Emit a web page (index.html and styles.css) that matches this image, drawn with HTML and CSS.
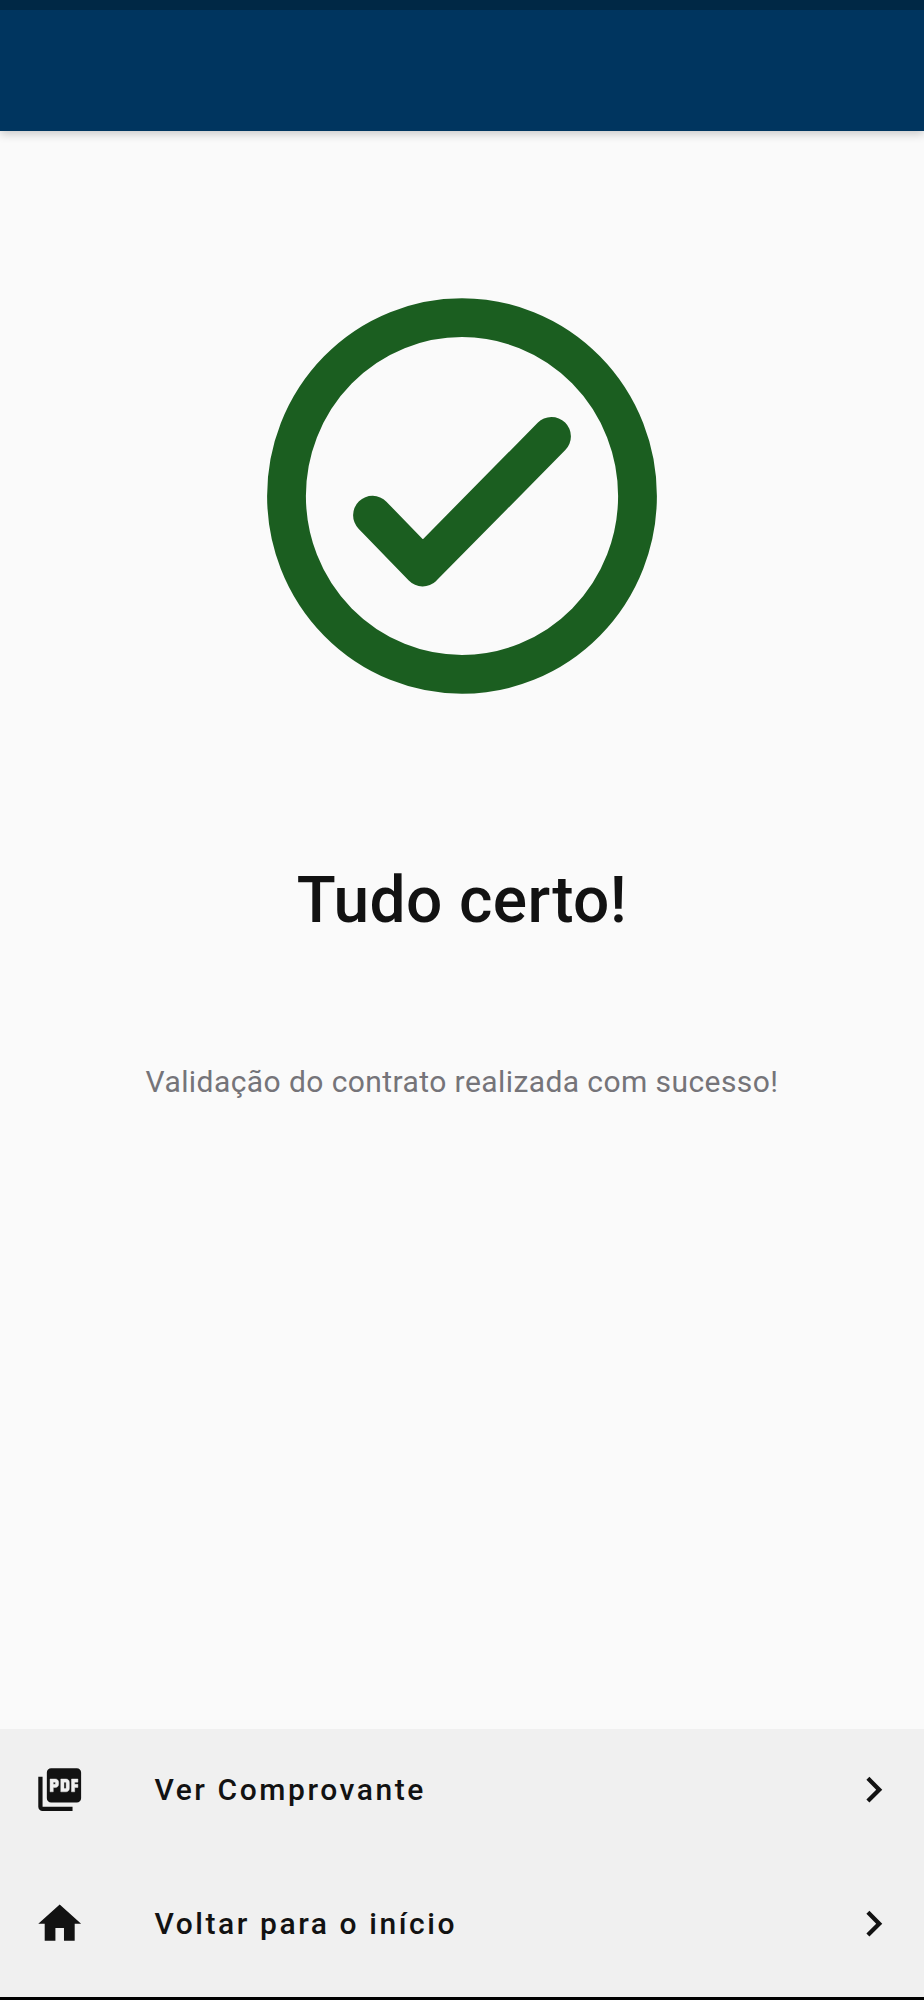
FILE: index.html
```html
<!DOCTYPE html>
<html lang="pt-BR">
<head>
  <meta charset="UTF-8">
  <meta name="viewport" content="width=device-width, initial-scale=1.0">
  <title>Tudo certo!</title>
  <link rel="stylesheet" href="styles.css">
</head>
<body>
  <div class="screen">
    <header class="app-bar"></header>

    <main class="content">
      <svg class="check" viewBox="0 0 390 396">
        <ellipse cx="195" cy="198" rx="175.5" ry="178.3"/>
        <path d="M105.5 217.2L155.7 269L284.5 138.4"/>
      </svg>
      <h1>Tudo certo!</h1>
      <p>Validação do contrato realizada com sucesso!</p>
    </main>

    <nav class="actions">
      <a class="action">
        <svg class="icon pdf" viewBox="0 0 24 24">
          <path d="M20 2H8c-1.100 0-2 .9-2 2v12c0 1.100.9 2 2 2h12c1.100 0 2-.9 2-2V4c0-1.100-.9-2-2-2zM4 6H2v14c0 1.100.9 2 2 2h14v-2H4V6z"/>
          <path class="mark" d="M11.500 9.500c0 .83-.67 1.500-1.500 1.500H9v2H7.500V7H10c.83 0 1.500.67 1.500 1.500v1zm5 2c0 .83-.67 1.500-1.500 1.500h-2.500V7H15c.83 0 1.500.67 1.500 1.500v3zm4-3H19v1h1.500V11H19v2h-1.500V7h3v1.500zM9 9.500h1v-1H9v1zm5 2h1v-3h-1v3z"/>
        </svg>
        <span class="label">Ver Comprovante</span>
        <svg class="icon" viewBox="0 0 24 24"><path d="M10 6L8.590 7.410 13.170 12l-4.580 4.590L10 18l6-6z"/></svg>
      </a>
      <a class="action">
        <svg class="icon" viewBox="0 0 24 24"><path d="M10 20v-6h4v6h5v-8h3L12 3 2 12h3v8z"/></svg>
        <span class="label">Voltar para o início</span>
        <svg class="icon" viewBox="0 0 24 24"><path d="M10 6L8.590 7.410 13.170 12l-4.580 4.590L10 18l6-6z"/></svg>
      </a>
    </nav>
  </div>
</body>
</html>
```
FILE: styles.css
```css
* { box-sizing: border-box; }
body {
  font-family: Roboto, sans-serif;
  margin: 0;
  background: #fafafa;
  color: #121212;
}
.screen {
  display: flex;
  flex-direction: column;
  height: 2000px;
  overflow: hidden;
}
.app-bar {
  flex: none;
  height: 130.5px;
  background: #00355f;
  border-top: 10px solid #002845;
  box-shadow: 0 3px 9px rgba(0,0,0,0.2);
}
.content {
  flex: 1;
  display: flex;
  flex-direction: column;
  align-items: center;
  padding-top: 167.5px;
  text-align: center;
}
.check {
  width: 390px;
  height: 396px;
  fill: none;
  stroke: #1b5e20;
  stroke-width: 38.8;
  stroke-linecap: round;
  stroke-linejoin: round;
}
h1 {
  margin: 169px 0 0;
  font-size: 64px;
  font-weight: 500;
  line-height: 76px;
  letter-spacing: 0.4px;
}
p {
  margin: 125px 0 0;
  font-size: 30px;
  line-height: 36px;
  letter-spacing: 0.42px;
  color: #757479;
}
.actions {
  flex: none;
  height: 271px;
  background: #f0f0f0;
  border-bottom: 3px solid #000;
}
.action {
  display: flex;
  align-items: center;
  height: 134px;
  padding: 0 25px 12px 34px;
}
.icon {
  width: 51.4px;
  height: 51.4px;
  fill: #121212;
}
.pdf .mark {
  fill: #f0f0f0;
  stroke: #f0f0f0;
  stroke-width: 0.2;
}
.label {
  flex: 1;
  padding: 0 0 1px 69px;
  font-size: 30px;
  font-weight: 500;
  letter-spacing: 2.57px;
}
```
